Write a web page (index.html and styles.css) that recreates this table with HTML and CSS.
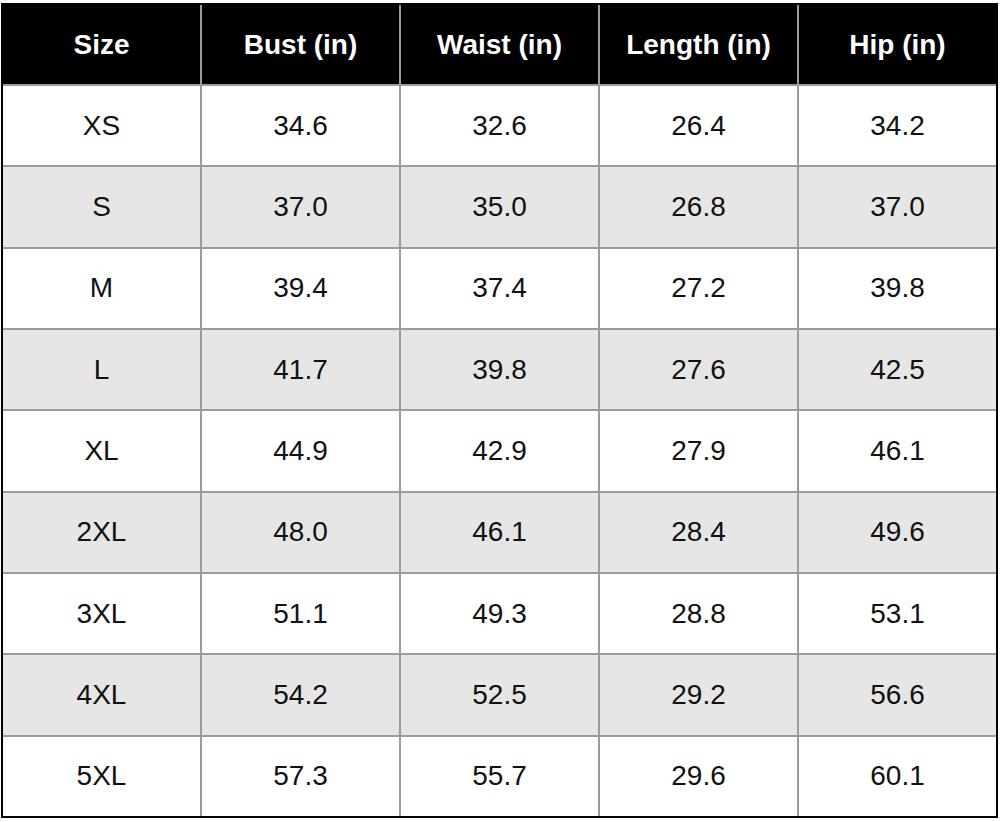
FILE: index.html
```html
<!DOCTYPE html>
<html>
<head>
<meta charset="utf-8">
<link rel="stylesheet" href="styles.css">
</head>
<body>
<div class="chart">
  <div class="cell head">Size</div>
  <div class="cell head">Bust (in)</div>
  <div class="cell head">Waist (in)</div>
  <div class="cell head">Length (in)</div>
  <div class="cell head">Hip (in)</div>

  <div class="cell">XS</div><div class="cell">34.6</div><div class="cell">32.6</div><div class="cell">26.4</div><div class="cell">34.2</div>
  <div class="cell alt">S</div><div class="cell alt">37.0</div><div class="cell alt">35.0</div><div class="cell alt">26.8</div><div class="cell alt">37.0</div>
  <div class="cell">M</div><div class="cell">39.4</div><div class="cell">37.4</div><div class="cell">27.2</div><div class="cell">39.8</div>
  <div class="cell alt">L</div><div class="cell alt">41.7</div><div class="cell alt">39.8</div><div class="cell alt">27.6</div><div class="cell alt">42.5</div>
  <div class="cell">XL</div><div class="cell">44.9</div><div class="cell">42.9</div><div class="cell">27.9</div><div class="cell">46.1</div>
  <div class="cell alt">2XL</div><div class="cell alt">48.0</div><div class="cell alt">46.1</div><div class="cell alt">28.4</div><div class="cell alt">49.6</div>
  <div class="cell">3XL</div><div class="cell">51.1</div><div class="cell">49.3</div><div class="cell">28.8</div><div class="cell">53.1</div>
  <div class="cell alt">4XL</div><div class="cell alt">54.2</div><div class="cell alt">52.5</div><div class="cell alt">29.2</div><div class="cell alt">56.6</div>
  <div class="cell">5XL</div><div class="cell">57.3</div><div class="cell">55.7</div><div class="cell">29.6</div><div class="cell">60.1</div>
</div>
</body>
</html>
```
FILE: styles.css
```css
html, body {
  margin: 0;
  padding: 0;
  background: #ffffff;
}
.chart {
  margin: 3px 0 0 1px;
  width: 993px;
  height: 811px;
  border: 2px solid #000;
  background: #9b9b9b;
  display: grid;
  grid-template-columns: repeat(5, 1fr);
  grid-template-rows: 79px repeat(9, 1fr);
  gap: 2px;
  font-family: "Liberation Sans", Arial, sans-serif;
}
.cell {
  background: #ffffff;
  color: #111;
  font-size: 28px;
  display: flex;
  align-items: center;
  justify-content: center;
}
.cell.alt {
  background: #e6e6e6;
}
.cell.head {
  background: #000;
  color: #fff;
  font-weight: bold;
}
```
